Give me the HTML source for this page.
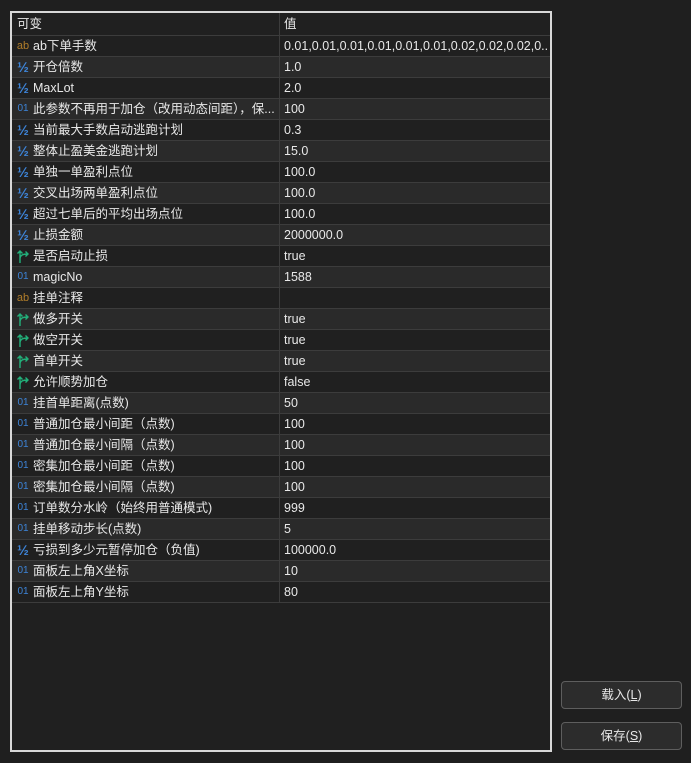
<!DOCTYPE html>
<html><head><meta charset="utf-8"><style>
*{margin:0;padding:0;box-sizing:border-box}
body{width:691px;height:763px;background:#1f1f1f;font-family:"Liberation Sans","Noto Sans CJK SC",sans-serif;font-size:12.5px;color:#e8e8e8;position:relative;overflow:hidden}
.tbl{position:absolute;left:10px;top:11px;width:542px;height:741px;border:2px solid #d8d8d8;background:#202020}
.row{position:absolute;left:0;width:538px;height:21px;border-bottom:1px solid #3c3c3c}
.row.e{background:#2a2a2a}
.c1{position:absolute;left:0;top:0;width:268px;height:21px;line-height:20px;padding-left:21px;white-space:nowrap;overflow:hidden;border-right:1px solid #3c3c3c}
.c2{position:absolute;left:272px;top:0;width:264px;line-height:20px;white-space:nowrap;overflow:hidden;text-overflow:clip}
.ic{position:absolute;left:3px;top:0;width:16px;height:20px;line-height:20px;font-size:11px;text-align:center;display:block}
.ab{color:#b07d2a}.hf{color:#3d84d8;font-size:14px;font-weight:bold}.n{color:#3d84d8;font-size:10px}
.hdr{position:absolute;left:0;top:0;width:538px;height:23px;border-bottom:1px solid #3c3c3c}
.hdr .c1{height:23px;line-height:22px;padding-left:5px}
.hdr .c2{line-height:22px}
.btn{position:absolute;left:561px;width:121px;height:28px;border:1px solid #5e5e5e;border-radius:4px;background:#2c2c2c;color:#e8e8e8;text-align:center;line-height:26px;font-size:12.5px}
</style></head><body>
<div class="tbl">
<div class="hdr"><div class="c1">可变</div><div class="c2">值</div></div>
<div id="rows"></div>
</div>
<div class="btn" style="top:681px">载入(<u>L</u>)</div>
<div class="btn" style="top:722px">保存(<u>S</u>)</div>
<script>
var A='<svg width="16" height="20" viewBox="0 0 16 20" style="display:block"><path d="M5 17V5M2.5 7.5L5 5l2.5 2.5M5 13c0-4 3-5 8-5M10.5 5.5L13 8l-2.5 2.5" fill="none" stroke="#22b07a" stroke-width="1.4"/></svg>';
var d=[["ab","ab下单手数","0.01,0.01,0.01,0.01,0.01,0.01,0.02,0.02,0.02,0...."],["h","开仓倍数","1.0"],["h","MaxLot","2.0"],["n","此参数不再用于加仓（改用动态间距），保...","100"],["h","当前最大手数启动逃跑计划","0.3"],["h","整体止盈美金逃跑计划","15.0"],["h","单独一单盈利点位","100.0"],["h","交叉出场两单盈利点位","100.0"],["h","超过七单后的平均出场点位","100.0"],["h","止损金额","2000000.0"],["a","是否启动止损","true"],["n","magicNo","1588"],["ab","挂单注释",""],["a","做多开关","true"],["a","做空开关","true"],["a","首单开关","true"],["a","允许顺势加仓","false"],["n","挂首单距离(点数)","50"],["n","普通加仓最小间距（点数)","100"],["n","普通加仓最小间隔（点数)","100"],["n","密集加仓最小间距（点数)","100"],["n","密集加仓最小间隔（点数)","100"],["n","订单数分水岭（始终用普通模式)","999"],["n","挂单移动步长(点数)","5"],["h","亏损到多少元暂停加仓（负值)","100000.0"],["n","面板左上角X坐标","10"],["n","面板左上角Y坐标","80"]];
var h='';d.forEach(function(r,i){var ic=r[0]=='ab'?'<span class="ic ab">ab</span>':r[0]=='h'?'<span class="ic hf">½</span>':r[0]=='n'?'<span class="ic n">01</span>':'<span class="ic">'+A+'</span>';
h+='<div class="row'+(i%2?' e':'')+'" style="top:'+(23+i*21)+'px"><div class="c1">'+ic+r[1]+'</div><div class="c2">'+r[2]+'</div></div>';});
document.getElementById('rows').innerHTML=h;
</script>
</body></html>
